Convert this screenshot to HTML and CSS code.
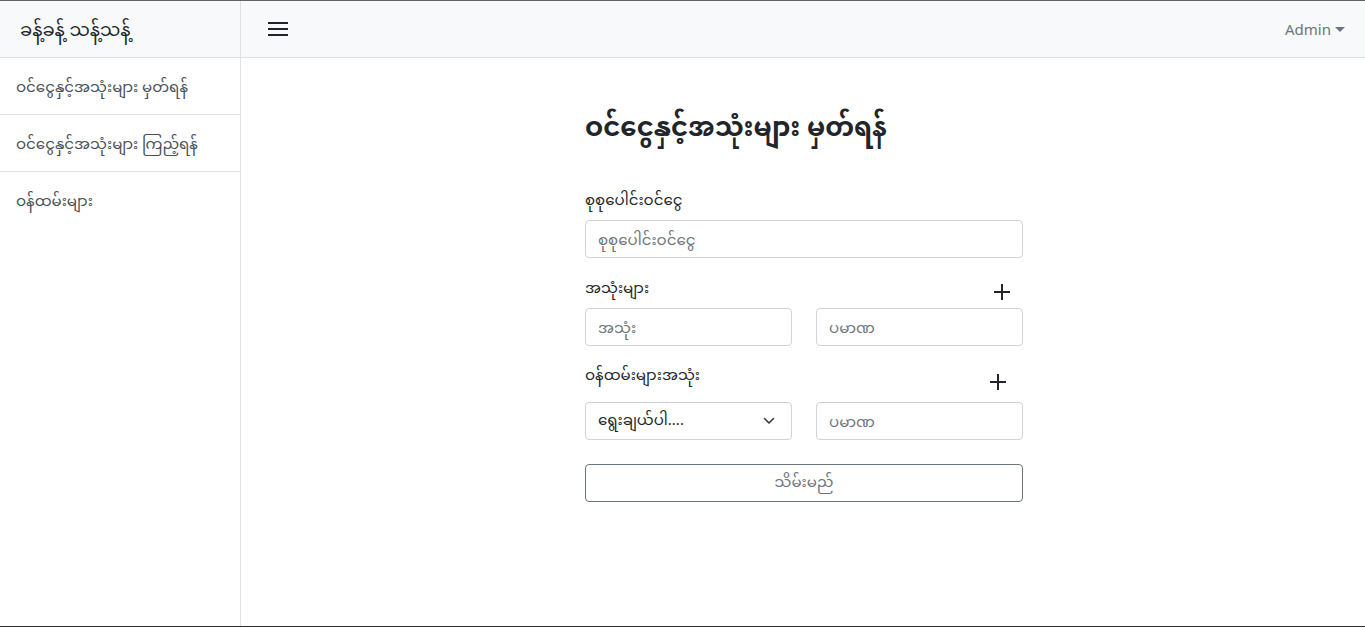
FILE: index.html
```html
<!DOCTYPE html>
<html lang="my">
<head>
<meta charset="utf-8">
<title>ဝင်ငွေနှင့်အသုံးများ မှတ်ရန်</title>
<link rel="stylesheet" href="styles.css">
</head>
<body>
<div class="app">
  <aside class="sidebar">
    <div class="brand">ခန့်ခန့် သန့်သန့်</div>
    <nav class="menu">
      <a class="menu-item" href="#">ဝင်ငွေနှင့်အသုံးများ မှတ်ရန်</a>
      <a class="menu-item" href="#">ဝင်ငွေနှင့်အသုံးများ ကြည့်ရန်</a>
      <a class="menu-item menu-item-last" href="#">ဝန်ထမ်းများ</a>
    </nav>
  </aside>
  <div class="page">
    <header class="topbar">
      <button class="toggle" type="button" aria-label="menu">
        <svg width="20" height="16" viewBox="0 0 20 16"><path d="M0 2h20M0 8h20M0 14h20" stroke="#212529" stroke-width="2"/></svg>
      </button>
      <div class="user">Admin<span class="caret"></span></div>
    </header>
    <main class="content">
      <form class="entry">
        <h3 class="title">ဝင်ငွေနှင့်အသုံးများ မှတ်ရန်</h3>
        <div class="group">
          <label class="label">စုစုပေါင်းဝင်ငွေ</label>
          <input class="field" type="text" placeholder="စုစုပေါင်းဝင်ငွေ">
        </div>
        <div class="group group-expense">
          <div class="label-row">
            <label class="label">အသုံးများ</label>
            <span class="plus plus-a"><svg width="18" height="18" viewBox="0 0 18 18"><path d="M9 1v16M1 9h16" stroke="#212529" stroke-width="2"/></svg></span>
          </div>
          <div class="pair">
            <input class="field" type="text" placeholder="အသုံး">
            <input class="field" type="text" placeholder="ပမာဏ">
          </div>
        </div>
        <div class="group group-staff">
          <div class="label-row">
            <label class="label">ဝန်ထမ်းများအသုံး</label>
            <span class="plus plus-b"><svg width="18" height="18" viewBox="0 0 18 18"><path d="M9 1v16M1 9h16" stroke="#212529" stroke-width="2"/></svg></span>
          </div>
          <div class="pair">
            <div class="select">ရွေးချယ်ပါ....
              <svg class="chev" width="12" height="8" viewBox="0 0 12 8"><path d="M1.5 1.5l4.5 4.5 4.5-4.5" fill="none" stroke="#343a40" stroke-width="1.6" stroke-linecap="round" stroke-linejoin="round"/></svg>
            </div>
            <input class="field" type="text" placeholder="ပမာဏ">
          </div>
        </div>
        <button class="save" type="button">သိမ်းမည်</button>
      </form>
    </main>
  </div>
</div>
</body>
</html>
```

FILE: styles.css
```css
* { box-sizing: border-box; }
html, body { margin: 0; padding: 0; }
body {
  font-family: "Noto Sans", "Noto Sans Myanmar", "Padauk", "DejaVu Sans", sans-serif;
  font-size: 15px;
  color: #212529;
  background: #fff;
}
.app {
  display: flex;
  height: 627px;
  border-top: 1px solid #5f6368;
  border-bottom: 1px solid #2b2b2b;
  overflow: hidden;
}
.sidebar {
  width: 241px;
  flex: 0 0 241px;
  border-right: 1px solid #dee2e6;
  display: flex;
  flex-direction: column;
}
.brand {
  height: 57px;
  background: #f8f9fa;
  border-bottom: 1px solid #dee2e6;
  display: flex;
  align-items: center;
  padding: 5px 0 0 20px;
  font-size: 18px;
  color: #212529;
}
.menu { display: flex; flex-direction: column; }
.menu-item {
  height: 57px;
  display: flex;
  align-items: center;
  padding: 4px 0 0 16px;
  color: #495057;
  text-decoration: none;
  border-bottom: 1px solid #dee2e6;
  background: #fff;
}
.menu-item-last { border-bottom: none; }
.page { flex: 1; display: flex; flex-direction: column; }
.topbar {
  height: 57px;
  background: #f8f9fa;
  border-bottom: 1px solid #dee2e6;
  display: flex;
  align-items: center;
  justify-content: space-between;
  padding: 0 20px 0 27px;
}
.toggle {
  border: none;
  background: transparent;
  padding: 0;
  width: 20px;
  height: 16px;
  display: flex;
}
.user {
  color: #6c757d;
  display: flex;
  align-items: center;
  font-size: 15px;
}
.caret {
  margin-left: 4px;
  width: 0; height: 0;
  border-left: 5px solid transparent;
  border-right: 5px solid transparent;
  border-top: 5px solid #6c757d;
}
.content {
  flex: 1;
  display: flex;
  justify-content: center;
  padding: 48px 0 0 2px;
}
.entry { width: 438px; display: flex; flex-direction: column; }
.title {
  margin: 0 0 41px;
  font-size: 26px;
  font-weight: 700;
  line-height: 40px;
  color: #212529;
}
.group { margin-bottom: 16px; }
.label { display: block; line-height: 24px; margin-bottom: 9px; }
.label-row { display: flex; justify-content: space-between; align-items: flex-start; }
.plus { display: flex; }
.plus-a { margin: 8px 12px 0 0; }
.plus-b { margin: 11px 16px 0 0; }
.group-expense { margin-top: 1px; }
.group-staff .label-row { height: 40px; }
.pair { display: grid; grid-template-columns: 1fr 1fr; gap: 24px; }
.field, .select {
  width: 100%;
  height: 38px;
  border: 1px solid #ced4da;
  border-radius: 4px;
  padding: 0 12px;
  font: inherit;
  color: #212529;
  background: #fff;
}
.field::placeholder { color: #6c757d; }
.select { display: flex; align-items: center; justify-content: space-between; padding-right: 16px; }
.save {
  margin-top: 8px;
  height: 38px;
  border: 1px solid #6c757d;
  border-radius: 4px;
  background: #fff;
  color: #6c757d;
  font: inherit;
}
```
